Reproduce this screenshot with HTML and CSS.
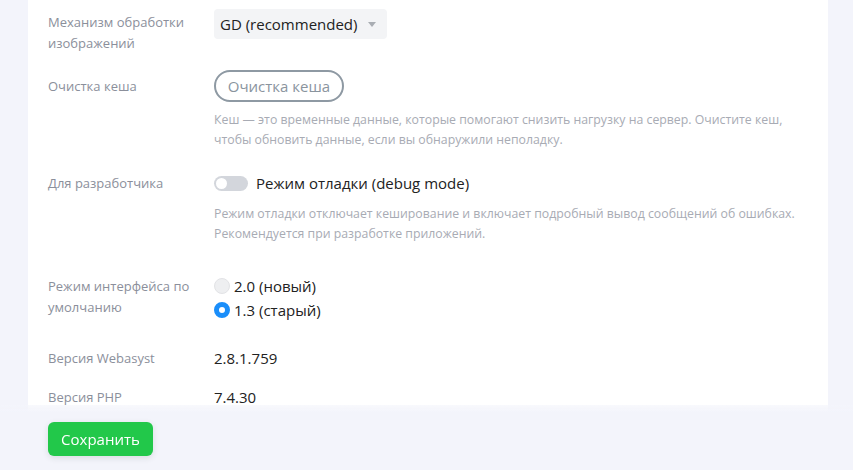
FILE: index.html
```html
<!DOCTYPE html>
<html lang="ru">
<head>
<meta charset="utf-8">
<title>Настройки</title>
<link rel="stylesheet" href="styles.css">
</head>
<body>
<main class="card">
  <div class="field field-image">
    <div class="label">Механизм обработки изображений</div>
    <div class="value">
      <div class="select">GD (recommended)<span class="caret"></span></div>
    </div>
  </div>
  <div class="field field-cache">
    <div class="label label-btn">Очистка кеша</div>
    <div class="value">
      <button class="btn-outline" type="button">Очистка кеша</button>
      <p class="hint hint-cache">Кеш — это временные данные, которые помогают снизить нагрузку на сервер. Очистите кеш, чтобы обновить данные, если вы обнаружили неполадку.</p>
    </div>
  </div>
  <div class="field field-dev">
    <div class="label">Для разработчика</div>
    <div class="value">
      <label class="switch-row"><span class="switch"><span class="knob"></span></span>Режим отладки (debug mode)</label>
      <p class="hint hint-dev">Режим отладки отключает кеширование и включает подробный вывод сообщений об ошибках. Рекомендуется при разработке приложений.</p>
    </div>
  </div>
  <div class="field field-ui">
    <div class="label">Режим интерфейса по умолчанию</div>
    <div class="value radios">
      <label class="radio-row"><span class="radio"></span>2.0 (новый)</label>
      <label class="radio-row"><span class="radio radio-on"></span>1.3 (старый)</label>
    </div>
  </div>
  <div class="field field-ver">
    <div class="label">Версия Webasyst</div>
    <div class="value">2.8.1.759</div>
  </div>
  <div class="field">
    <div class="label">Версия PHP</div>
    <div class="value">7.4.30</div>
  </div>
</main>
<footer class="bottombar">
  <button class="btn-save" type="button">Сохранить</button>
</footer>
</body>
</html>
```
FILE: styles.css
```css
html, body {
  margin: 0;
  padding: 0;
}
body {
  background: #f3f4fb;
  font-family: "Open Sans", "Noto Sans", sans-serif;
  color: #222;
  height: 470px;
  overflow: hidden;
}
.card {
  margin: 0 25px 0 28px;
  background: #fff;
  padding: 9px 20px 80px;
}
.field {
  display: grid;
  grid-template-columns: 166px 1fr;
}
.field-image { margin-bottom: 16px; }
.field-cache { margin-bottom: 23px; }
.field-dev { margin-bottom: 33px; }
.field-ui { margin-bottom: 28px; }
.field-ver { margin-bottom: 18px; }
.label {
  font-size: 13px;
  line-height: 21px;
  color: #8b8f9b;
  padding-right: 16px;
}
.field-image .label { padding-top: 3px; }
.label-btn { padding-top: 6px; }
.value {
  font-size: 15px;
  line-height: 20px;
  color: #222;
}
.select {
  display: inline-flex;
  align-items: center;
  width: 173px;
  height: 30px;
  box-sizing: border-box;
  padding-left: 6px;
  background: #f3f4f6;
  border-radius: 4px;
  position: relative;
}
.caret {
  position: absolute;
  right: 11px;
  top: 13px;
  width: 0;
  height: 0;
  border-left: 4px solid transparent;
  border-right: 4px solid transparent;
  border-top: 5px solid #a9adb3;
}
.btn-outline {
  width: 130px;
  height: 32px;
  box-sizing: border-box;
  border: 2px solid #8e99a3;
  border-radius: 16px;
  background: #fff;
  color: #8a949e;
  font-family: inherit;
  font-size: 15px;
  padding: 0;
  display: block;
}
.hint {
  margin: 9px 0 0;
  font-size: 12.3px;
  line-height: 20px;
  color: #a8abb4;
}
.hint-cache { margin-top: 8px; }
.hint-dev {
  margin-top: 11px;
  line-height: 19.5px;
}
.switch-row {
  display: flex;
  align-items: center;
  gap: 8px;
  height: 20px;
}
.switch {
  width: 34px;
  height: 15px;
  border-radius: 8px;
  background: #d3d6dc;
  display: inline-flex;
  align-items: center;
  padding: 0 2px;
  box-sizing: border-box;
}
.knob {
  width: 11px;
  height: 11px;
  border-radius: 50%;
  background: #fff;
}
.radios {
  display: flex;
  flex-direction: column;
  gap: 4px;
}
.radio-row {
  display: flex;
  align-items: center;
  gap: 4px;
  height: 20px;
}
.radio {
  width: 16px;
  height: 16px;
  box-sizing: border-box;
  border-radius: 50%;
  background: #eeeff1;
  border: 1px solid #e2e3e6;
}
.radio-on {
  background: #fff;
  border: 5px solid #1a8efa;
}
.bottombar {
  position: fixed;
  left: 0;
  right: 0;
  bottom: 0;
  height: 65px;
  padding: 17px 48px 0;
  box-sizing: border-box;
  background: linear-gradient(to bottom, rgba(243,244,251,0.6) 0, #f3f4fb 8px);
}
.btn-save {
  width: 105px;
  height: 34px;
  border: none;
  border-radius: 6px;
  background: #22c84a;
  color: #fff;
  font-family: inherit;
  font-size: 15px;
  padding: 0;
  box-shadow: 0 2px 6px rgba(30, 60, 40, 0.12);
}
```
